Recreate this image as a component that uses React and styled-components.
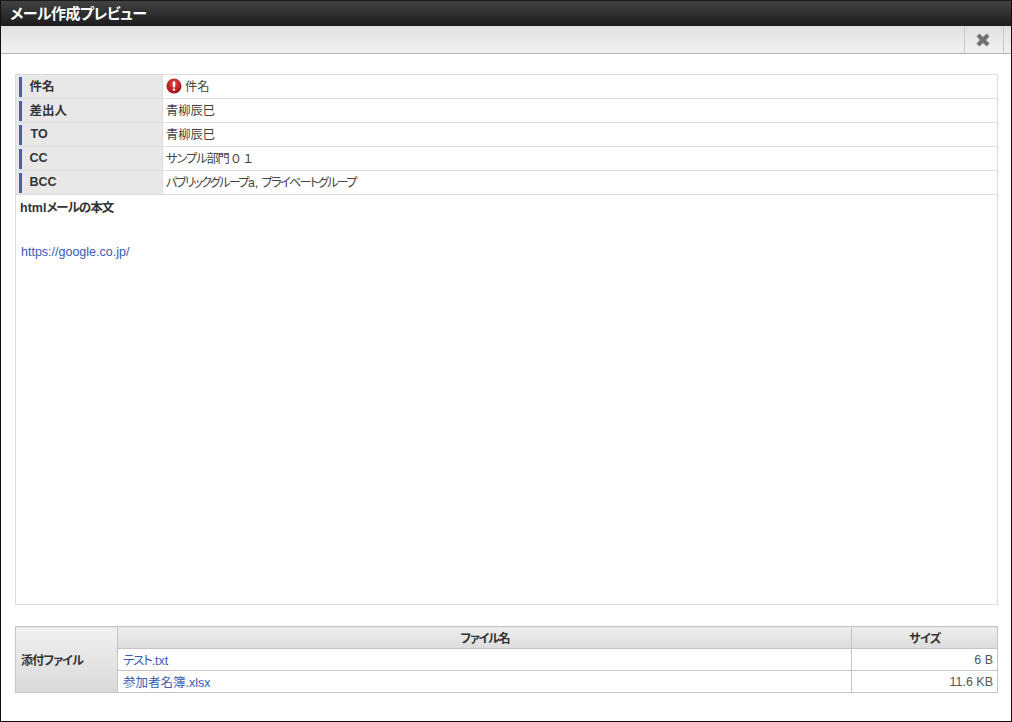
import React from 'react';
import styled, { createGlobalStyle } from 'styled-components';

const GlobalStyle = createGlobalStyle`
  html, body {
    margin: 0;
    padding: 0;
    background: #fff;
  }
  body {
    font-family: "Liberation Sans", "Noto Sans CJK JP", sans-serif;
    font-size: 12.5px;
    font-feature-settings: "palt";
    color: #333;
  }
`;

const Frame = styled.div`
  box-sizing: border-box;
  width: 1012px;
  height: 722px;
  border: 1px solid #111;
  border-top: 0;
  display: flex;
  flex-direction: column;
  background: #fff;
  overflow: hidden;
`;

const TitleBar = styled.div`
  height: 26px;
  flex: none;
  box-sizing: border-box;
  padding: 0 0 0 9px;
  background: linear-gradient(#424242, #1c1c1c);
  border-top: 1px solid #1a1a1a;
  color: #fff;
  font-size: 15px;
  font-weight: bold;
  letter-spacing: -0.5px;
  line-height: 26px;
`;

const Toolbar = styled.div`
  height: 28px;
  flex: none;
  box-sizing: border-box;
  display: flex;
  justify-content: flex-end;
  padding-right: 7px;
  background: linear-gradient(#e0e0e0, #f1f1f1);
  border-bottom: 1px solid #b5b5b5;
`;

const CloseButton = styled.div`
  width: 40px;
  box-sizing: border-box;
  padding-right: 2px;
  display: flex;
  align-items: center;
  justify-content: center;
  border-left: 1px solid #c8c8c8;
  border-right: 1px solid #c8c8c8;
`;

const Content = styled.div`
  padding: 20px 13px 0 14px;
`;

const InfoBox = styled.div`
  border: 1px solid #dcdcdc;
`;

const InfoRow = styled.div`
  height: 24px;
  box-sizing: border-box;
  display: flex;
  border-bottom: 1px solid #dcdcdc;
`;

const InfoLabel = styled.div`
  width: 147px;
  flex: none;
  box-sizing: border-box;
  margin-right: 1px;
  padding: 0 0 2px 3px;
  display: flex;
  align-items: center;
  background: #e8e8e8;
  font-weight: bold;
  font-size: 12.5px;
  color: #333;
  border-right: 1px solid #dcdcdc;

  &::before {
    content: "";
    width: 2.5px;
    height: 20px;
    margin: 2px 8px 0 0;
    background: #4763a8;
  }
`;

const LabelText = styled.span`
  padding-left: ${(props) => (props.$shift ? '1px' : '0')};
`;

const InfoValue = styled.div`
  flex: 1;
  padding: 0 0 2px 2px;
  display: flex;
  align-items: center;
  gap: 3px;
  color: #444;
  font-size: 12.25px;
`;

// kana in the reference runs much tighter than the installed CJK font
const Kana = styled.span`
  letter-spacing: ${(props) => props.$tracking || '-1px'};
`;

const WideDigits = styled.span`
  font-feature-settings: normal;
  margin-left: 1px;
`;

const Body = styled.div`
  height: 409px;
  box-sizing: border-box;
  padding: 6px 4px;
`;

const BodyTitle = styled.div`
  font-weight: bold;
  line-height: 15px;
  color: #333;
`;

const BodyLink = styled.a`
  display: block;
  margin: 29px 0 0 1px;
  line-height: 15px;
  color: #3a5bb8;
`;

const AttachTable = styled.table`
  width: 982px;
  margin-top: 21px;
  border-collapse: collapse;
  table-layout: fixed;

  th, td {
    border: 1px solid #c4c4c4;
    padding: 0 4px 0 5px;
  }
`;

const AttachHead = styled.th`
  height: 21px;
  padding: 0;
  background: linear-gradient(#eeeeee, #dcdcdc);
  color: #333;
  font-size: 12px;
  font-weight: bold;
  text-align: center;
`;

const AttachLabel = styled.th`
  background: linear-gradient(#f1f1f1, #d9d9d9);
  color: #333;
  font-size: 12px;
  font-weight: bold;
  text-align: left;
`;

const FileCell = styled.td`
  height: 21px;
  color: #3a5bb8;
`;

const SizeCell = styled.td`
  color: #555;
  text-align: right;
`;

const ErrorIcon = () => (
  <svg width="16" height="16" viewBox="0 0 16 16">
    <defs>
      <radialGradient id="errorFill" cx="50%" cy="35%" r="65%">
        <stop offset="0%" stopColor="#e04a4a" />
        <stop offset="100%" stopColor="#a80f0f" />
      </radialGradient>
    </defs>
    <circle cx="8" cy="8" r="7.5" fill="url(#errorFill)" />
    <rect x="6.8" y="3.2" width="2.4" height="6.2" rx="1" fill="#fff" />
    <rect x="6.8" y="10.4" width="2.4" height="2.3" rx="0.8" fill="#fff" />
  </svg>
);

const CloseIcon = () => (
  <svg width="14" height="14" viewBox="0 0 14 14">
    <path
      d="M3.4 1 7 4.4 10.6 1 13 3.4 9.6 7 13 10.6 10.6 13 7 9.6 3.4 13 1 10.6 4.4 7 1 3.4Z"
      fill="#6e6e6e"
      stroke="#6e6e6e"
      strokeWidth="0.8"
      strokeLinejoin="round"
    />
  </svg>
);

const rows = [
  { label: '差出人', value: '青柳辰巳' },
  { label: 'TO', value: '青柳辰巳', shift: true },
  {
    label: 'CC',
    value: (
      <span>
        <Kana $tracking="-1.1px">サンプル部門</Kana>
        <WideDigits>０１</WideDigits>
      </span>
    ),
  },
  {
    label: 'BCC',
    value: (
      <span>
        <Kana $tracking="-1.75px">パブリックグループ</Kana>
        a, <Kana $tracking="-1.75px">プライベートグループ</Kana>
      </span>
    ),
  },
];

const files = [
  { name: <><Kana $tracking="-1.2px">テスト</Kana>.txt</>, key: 'test', size: '6 B' },
  { name: '参加者名簿.xlsx', key: 'list', size: '11.6 KB' },
];

export default function App() {
  return (
    <>
      <GlobalStyle />
      <Frame>
        <TitleBar>メール作成プレビュー</TitleBar>
        <Toolbar>
          <CloseButton>
            <CloseIcon />
          </CloseButton>
        </Toolbar>
        <Content>
          <InfoBox>
            <InfoRow>
              <InfoLabel>件名</InfoLabel>
              <InfoValue>
                <ErrorIcon />
                件名
              </InfoValue>
            </InfoRow>
            {rows.map((row) => (
              <InfoRow key={row.label}>
                <InfoLabel>
                  <LabelText $shift={row.shift}>{row.label}</LabelText>
                </InfoLabel>
                <InfoValue>{row.value}</InfoValue>
              </InfoRow>
            ))}
            <Body>
              <BodyTitle>html<Kana>メールの本文</Kana></BodyTitle>
              <BodyLink>https://google.co.jp/</BodyLink>
            </Body>
          </InfoBox>
          <AttachTable>
            <colgroup>
              <col width="102" />
              <col width="734" />
              <col width="146" />
            </colgroup>
            <tbody>
              <tr>
                <AttachLabel rowSpan={3}><Kana $tracking="-0.8px">添付ファイル</Kana></AttachLabel>
                <AttachHead><Kana $tracking="-1.2px">ファイル名</Kana></AttachHead>
                <AttachHead><Kana $tracking="-0.5px">サイズ</Kana></AttachHead>
              </tr>
              {files.map((file) => (
                <tr key={file.key}>
                  <FileCell>{file.name}</FileCell>
                  <SizeCell>{file.size}</SizeCell>
                </tr>
              ))}
            </tbody>
          </AttachTable>
        </Content>
      </Frame>
    </>
  );
}
